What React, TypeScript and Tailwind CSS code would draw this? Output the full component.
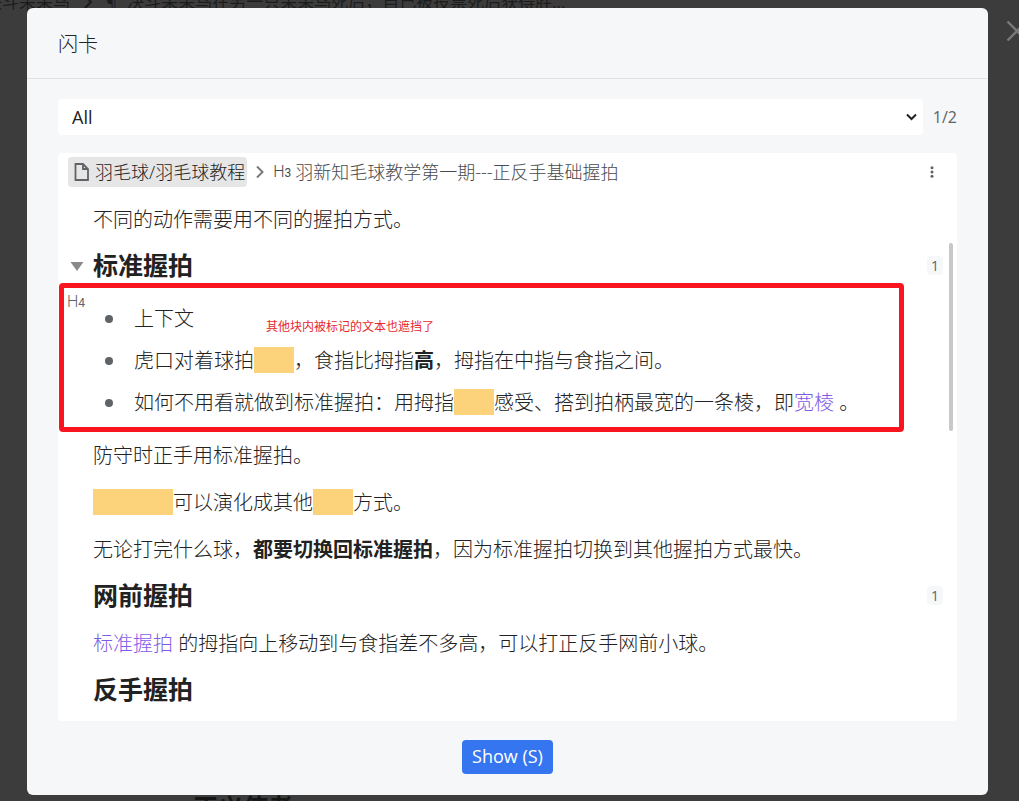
import type { ReactNode } from "react";

function Mask({ wide = false }: { wide?: boolean }) {
  return (
    <span
      role="img"
      aria-label="hidden"
      className={`inline-block h-[26px] bg-[#fcd37b] align-[-5px] ${wide ? "w-20" : "w-10"}`}
    />
  );
}

function Level({ value }: { value: number }) {
  return (
    <span className="font-['Roboto'] text-base leading-6 font-light">
      H<span className="text-xs font-normal">{value}</span>
    </span>
  );
}

function Paragraph({ children }: { children: ReactNode }) {
  return <p className="h-[47px] py-2 leading-[31px]">{children}</p>;
}

function Heading({ children, count, open = false }: { children: ReactNode; count?: number; open?: boolean }) {
  return (
    <div className="relative flex items-center justify-between pt-[7px] pb-[9px]">
      {open && (
        <button type="button" aria-label="Fold" className="absolute -left-6 top-[18px] p-px text-[#8a8a8a]">
          <svg width="14" height="9" viewBox="0 0 14 9" fill="currentColor">
            <path d="M0.5 0h13L7 9z" />
          </svg>
        </button>
      )}
      <h4 className="text-[25px] leading-[31px] font-bold">{children}</h4>
      {count !== undefined && (
        <span className="w-4 rounded-sm bg-[#f6f7f9] text-center text-sm leading-[19px] font-normal text-[#5f6368]">{count}</span>
      )}
    </div>
  );
}

function Item({ children }: { children: ReactNode }) {
  return (
    <li className="flex h-[42px] items-center gap-[21px] leading-8">
      <span className="size-2 shrink-0 rounded-full bg-[#5f6368]" />
      <span>{children}</span>
    </li>
  );
}

export default function App() {
  return (
    <div className="relative flex min-h-screen flex-col overflow-hidden bg-[#3c3c3c] pt-2 pr-[31px] pb-1.5 pl-[27px] font-['Open_Sans','Noto_Sans_CJK_SC',sans-serif] text-[#222]">
      <div className="absolute -top-2.5 -left-[15px] flex items-center text-[17px] leading-6 whitespace-nowrap text-[#1c1c1c]">
        <span>决斗呆呆鸟</span>
        <svg className="mx-3" width="12" height="14" viewBox="0 0 12 14" fill="none" stroke="currentColor" strokeWidth="2">
          <path d="M3 1l6 6-6 6" />
        </svg>
        <span className="mr-2.5">¶</span>
        <span>决斗呆呆鸟在另一只呆呆鸟死后，自己被投票死后获得胜...</span>
      </div>
      <div className="absolute -bottom-[22px] left-[193px] text-[25px] leading-[31px] font-bold text-[#161616]">正义使者</div>
      <button type="button" aria-label="Close" className="absolute top-[19px] -right-2.5 text-[#7a7a7a]">
        <svg width="24" height="24" viewBox="0 0 24 24" fill="none" stroke="currentColor" strokeWidth="2.4">
          <path d="M2.5 2.5l19 19M21.5 2.5l-19 19" />
        </svg>
      </button>

      <section role="dialog" aria-label="闪卡" className="relative flex flex-1 flex-col rounded-md bg-[#f6f7f9]">
        <header className="border-b border-[#e0e2e5] px-[31px] pt-[22px] pb-[18px]">
          <h1 className="text-xl leading-[30px] font-light">闪卡</h1>
        </header>

        <div className="flex flex-1 flex-col px-[31px] pt-5">
          <div className="flex items-center gap-2.5">
            <div className="relative flex-1">
              <select aria-label="Deck" className="h-9 w-full appearance-none rounded bg-white px-3.5 text-lg leading-6">
                <option>All</option>
              </select>
              <svg className="pointer-events-none absolute top-3.5 right-1.5" width="11" height="8" viewBox="0 0 11 8" fill="none" stroke="#222" strokeWidth="2">
                <path d="M1 1.5l4.5 4.5L10 1.5" />
              </svg>
            </div>
            <span className="text-base leading-6 text-[#5f6368]">1/2</span>
          </div>

          <article className="relative mt-[18px] flex-1 rounded-sm bg-white pb-1.5">
            <nav className="flex items-center px-2.5 pt-1 text-lg leading-[30px] font-light">
              <a href="#doc" className="flex items-center gap-1 rounded bg-[#e6e6e6] pr-0.5 pl-1">
                <svg width="19" height="20" viewBox="0 0 19 20" fill="none" stroke="#5f6368" strokeWidth="1.8">
                  <path d="M3.5 2h7.5l5 5v11h-12.5zM11 2v5h5" />
                </svg>
                羽毛球/羽毛球教程
              </a>
              <svg className="mx-2" width="10" height="14" viewBox="0 0 10 14" fill="none" stroke="#77797c" strokeWidth="2">
                <path d="M2 1.5L7.5 7 2 12.5" />
              </svg>
              <a href="#block" className="flex items-center gap-1 text-[#47494c]">
                <Level value={3} />
                羽新知毛球教学第一期---正反手基础握拍
              </a>
              <button type="button" aria-label="More" className="mr-3 ml-auto p-px">
                <svg width="4" height="12" viewBox="0 0 4 12" fill="#5f6368">
                  <circle cx="2" cy="1.7" r="1.5" />
                  <circle cx="2" cy="6" r="1.5" />
                  <circle cx="2" cy="10.3" r="1.5" />
                </svg>
              </button>
            </nav>

            <div className="mt-[9px] pr-3.5 pl-[35px] text-xl font-light">
              <Paragraph>不同的动作需要用不同的握拍方式。</Paragraph>
              <Heading open count={1}>标准握拍</Heading>
              <div className="relative">
                <ul className="py-2 pl-3">
                  <Item>上下文</Item>
                  <Item>
                    虎口对着球拍
                    <Mask />
                    ，食指比拇指<b className="font-bold">高</b>，拇指在中指与食指之间。
                  </Item>
                  <Item>
                    如何不用看就做到标准握拍：用拇指
                    <Mask />
                    感受、搭到拍柄最宽的一条棱，即<a href="#ridge" className="text-[#7f5ce6]">宽棱</a> 。
                  </Item>
                </ul>
                <span className="absolute top-0 -left-[26px] flex text-[#5f6368]">
                  <Level value={4} />
                </span>
                <div className="absolute -top-[7px] right-[39px] bottom-0 -left-[34px] rounded-sm border-5 border-[#f9141f]" />
                <span className="absolute top-7 left-[173px] text-xs leading-[18px] font-normal text-[#e8292c]">其他块内被标记的文本也遮挡了</span>
              </div>
              <Paragraph>防守时正手用标准握拍。</Paragraph>
              <Paragraph>
                <Mask wide />
                可以演化成其他
                <Mask />
                方式。
              </Paragraph>
              <Paragraph>
                无论打完什么球，<b className="font-bold">都要切换回标准握拍</b>，因为标准握拍切换到其他握拍方式最快。
              </Paragraph>
              <Heading count={1}>网前握拍</Heading>
              <Paragraph>
                <a href="#grip" className="text-[#7f5ce6]">标准握拍</a> 的拇指向上移动到与食指差不多高，可以打正反手网前小球。
              </Paragraph>
              <Heading>反手握拍</Heading>
            </div>
            <div className="absolute top-[90px] right-1 h-[188px] w-1 rounded-full bg-[#c8c8c8]" />
          </article>
        </div>

        <footer className="flex justify-center pt-[19px] pb-[21px]">
          <button type="button" className="rounded bg-[#3575f0] px-2.5 pt-1 pb-1.5 text-lg leading-6 text-white">
            Show (S)
          </button>
        </footer>
      </section>
    </div>
  );
}
